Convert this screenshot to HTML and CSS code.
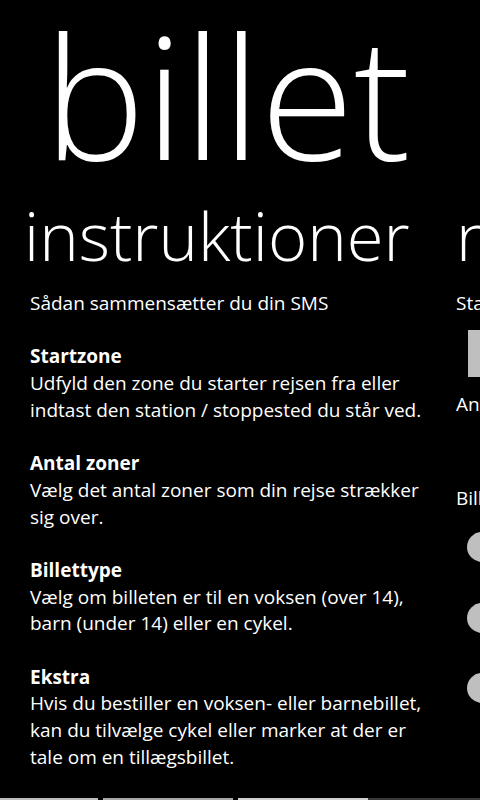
FILE: index.html
```html
<!DOCTYPE html>
<html lang="da">
<head>
<meta charset="utf-8">
<link rel="stylesheet" href="styles.css">
</head>
<body>
<div class="panorama">
  <div class="pano-title">billet</div>
  <div class="items">
    <section class="item item-first">
      <h2 class="item-header">instruktioner</h2>
      <div class="item-body">
        <p class="line">Sådan sammensætter du din SMS</p>
        <div class="block">
          <p class="line bold">Startzone</p>
          <p class="line">Udfyld den zone du starter rejsen fra eller</p>
          <p class="line">indtast den station / stoppested du står ved.</p>
        </div>
        <div class="block">
          <p class="line bold">Antal zoner</p>
          <p class="line">Vælg det antal zoner som din rejse strækker</p>
          <p class="line">sig over.</p>
        </div>
        <div class="block">
          <p class="line bold">Billettype</p>
          <p class="line">Vælg om billeten er til en voksen (over 14),</p>
          <p class="line">barn (under 14) eller en cykel.</p>
        </div>
        <div class="block">
          <p class="line bold">Ekstra</p>
          <p class="line">Hvis du bestiller en voksen- eller barnebillet,</p>
          <p class="line">kan du tilvælge cykel eller marker at der er</p>
          <p class="line">tale om en tillægsbillet.</p>
        </div>
      </div>
    </section>
    <section class="item item-second">
      <h2 class="item-header">ny billet</h2>
      <div class="item-body">
        <p class="line label">Startzone</p>
        <div class="textbox"></div>
        <p class="line label">Antal zoner</p>
        <div class="spacer"></div>
        <p class="line label">Billettype</p>
        <div class="radios">
          <span class="radio"></span>
          <span class="radio"></span>
          <span class="radio"></span>
        </div>
      </div>
    </section>
  </div>
  <div class="progress">
    <span class="seg seg-a"></span>
    <span class="seg seg-b"></span>
    <span class="seg seg-c"></span>
    <span class="seg seg-d"></span>
  </div>
</div>
</body>
</html>
```

FILE: styles.css
```css
html, body {
  margin: 0;
  padding: 0;
  background: #000;
  width: 480px;
  height: 800px;
  overflow: hidden;
}

.panorama {
  position: relative;
  width: 480px;
  height: 800px;
  color: #fff;
  font-family: "Open Sans", "Noto Sans", sans-serif;
  overflow: hidden;
}

.pano-title {
  font-weight: 300;
  font-size: 170px;
  line-height: 1;
  margin: 0;
  padding-top: 9px;
  padding-left: 44px;
  height: 181px;
  white-space: nowrap;
  letter-spacing: 0;
}

.items {
  display: flex;
  gap: 26px;
  width: 1000px;
}

.item {
  flex: none;
}

.item-first {
  width: 430px;
}

.item-second {
  width: 400px;
}

.item-header {
  margin: 0;
  font-weight: 300;
  font-size: 67px;
  line-height: 90px;
  white-space: nowrap;
  letter-spacing: 0;
}

.item-first .item-header {
  padding-left: 24px;
}

.item-body {
  padding-top: 10px;
}

.item-first .item-body {
  padding-left: 30px;
}

.line {
  margin: 0;
  font-size: 19px;
  line-height: 26.7px;
  white-space: nowrap;
}

.bold {
  font-weight: 700;
}

.block {
  margin-top: 26.7px;
}

.label {
  color: #fff;
}

.textbox {
  margin: 13px 0 14px 12px;
  width: 420px;
  height: 47px;
  background: #bfbfbf;
}

.spacer {
  height: 68px;
}

.radios {
  display: flex;
  flex-direction: column;
  gap: 40.5px;
  margin-top: 20px;
  padding-left: 11px;
}

.radio {
  display: block;
  width: 30px;
  height: 30px;
  border-radius: 50%;
  background: #bfbfbf;
}

.progress {
  position: absolute;
  left: 0;
  right: 0;
  bottom: 0;
  height: 2px;
  display: flex;
}

.seg {
  display: block;
  height: 2px;
}

.seg-a { width: 98px; background: #bdbdbd; margin-right: 5px; }
.seg-b { width: 130px; background: #a8a8a8; margin-right: 5px; }
.seg-c { width: 130px; background: #d0d0d0; }
.seg-d { flex: 1; background: #3a3a3a; }
```
